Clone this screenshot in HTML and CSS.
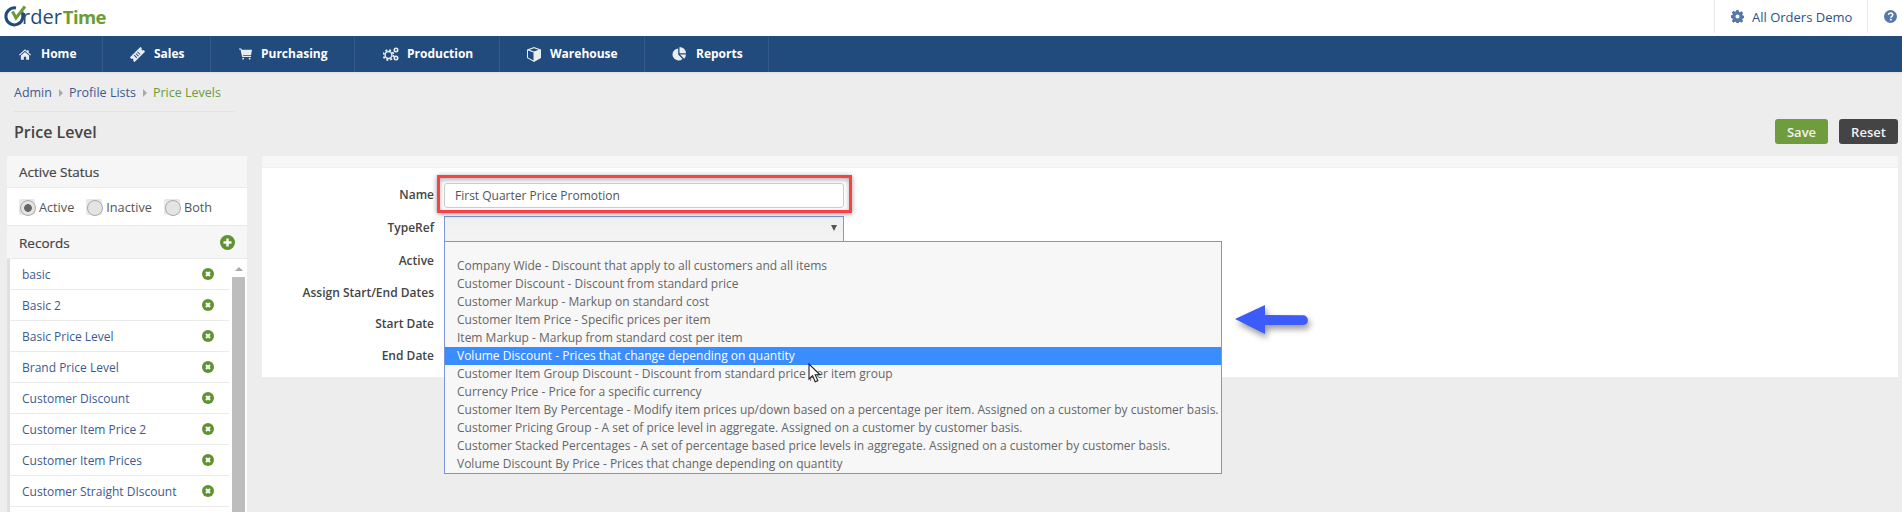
FILE: index.html
```html
<!DOCTYPE html>
<html lang="en">
<head>
<meta charset="utf-8">
<title>Price Level</title>
<link rel="stylesheet" href="styles.css">
</head>
<body>
<header class="topbar">
  <div class="logo"><svg class="logo-o" width="20" height="24" viewBox="0 0 20 24"><path d="M15 7A8.500 8.500 0 1 1 10 4" fill="none" stroke="#1f4a7d" stroke-width="3"/><path d="M6.500 7.500l3.500 6.500L19 2.500" fill="none" stroke="#6c9c38" stroke-width="3"/></svg><span class="logo-order">rder</span><span class="logo-time">Time</span></div>
  <div class="top-right">
    <div class="top-company"><svg class="gear" width="13" height="13" viewBox="0 0 16 16"><path fill="#5578a8" fill-rule="evenodd" d="M6.600 0h2.800l.4 2.200 1.300.6 1.900-1.200 2 2-1.200 1.900.5 1.300 1.700.4v2.800l-1.700.4-.5 1.300 1.200 1.900-2 2-1.900-1.200-1.300.5-.4 1.600H6.600l-.4-1.600-1.300-.5-1.900 1.200-2-2 1.200-1.900-.5-1.300L0 9.400V6.600l1.700-.4.5-1.300L1 3l2-2 1.900 1.200 1.300-.6zM8 5.500a2.500 2.500 0 100 5 2.500 2.500 0 000-5z"/></svg><span>All Orders Demo</span></div>
    <div class="top-help"><svg width="13" height="13" viewBox="0 0 14 14"><circle cx="7" cy="7" r="7" fill="#5578a8"/><path d="M4.700 5.300C4.900 3.900 5.900 3.300 7.100 3.300c1.300 0 2.300.8 2.300 1.900 0 1.700-2 1.600-2 3.200" fill="none" stroke="#fff" stroke-width="1.700"/><rect x="6.400" y="9.500" width="1.900" height="1.800" fill="#fff"/></svg></div>
  </div>
</header>
<nav class="navbar">
  <a class="nav-item nav-home"><svg width="12" height="11" viewBox="0 0 14 12"><path fill="#e8edf3" d="M7 0l2.500 2.200V1h1.800v2.800L14 6.200l-.8.9L7 1.700.8 7.100 0 6.200zM2.200 7.200L7 3l4.800 4.200V12H8.300V8.500H5.700V12H2.200z"/></svg><span>Home</span></a>
  <a class="nav-item nav-sales"><svg width="15" height="15" viewBox="0 0 16 16"><g transform="rotate(-45 8 8)"><path fill="#e8edf3" fill-rule="evenodd" d="M0 4.500h16v2.200a1.300 1.300 0 000 2.600v2.200H0V9.300a1.300 1.300 0 000-2.600zM4.500 6v4h1V6zM7 6v4h1V6zM9.500 6v4h1V6z"/></g></svg><span>Sales</span></a>
  <a class="nav-item nav-purch"><svg width="13" height="12" viewBox="0 0 14 12"><path fill="#e8edf3" d="M0 0h2.500l.5 1.500h11l-1 5.500H4.200l.3 1h8.500v1.200H3.400L1.600 1.200H0z"/><circle cx="4.500" cy="11" r="1" fill="#e8edf3"/><circle cx="11.500" cy="11" r="1" fill="#e8edf3"/></svg><span>Purchasing</span></a>
  <a class="nav-item nav-prod"><svg width="16" height="14" viewBox="0 0 16 14"><circle cx="5.500" cy="8" r="3.400" fill="none" stroke="#e8edf3" stroke-width="1.500"/><circle cx="5.500" cy="8" r="5" fill="none" stroke="#e8edf3" stroke-width="1.800" stroke-dasharray="2 1.930"/><circle cx="13" cy="3" r="1.700" fill="none" stroke="#e8edf3" stroke-width="1.600"/><circle cx="13" cy="11" r="1.700" fill="none" stroke="#e8edf3" stroke-width="1.600"/></svg><span>Production</span></a>
  <a class="nav-item nav-ware"><svg width="14" height="15" viewBox="0 0 14 15"><path fill="#e8edf3" fill-rule="evenodd" d="M7 0l7 2.500v8.500l-7 4-7-4V2.500zM7 1.200L2.500 2.800 7 4.500l4.500-1.700zM1 3.500V10.400l5.500 3V5.400z"/></svg><span>Warehouse</span></a>
  <a class="nav-item nav-rep"><svg width="14" height="14" viewBox="0 0 14 14"><path fill="#e8edf3" d="M6.200 1.500V7.500L10.500 12A6 6 0 116.200 1.500zM7.500 0A6.500 6.500 0 0114 6.300H7.500zM8 7.500h6a6.500 6.500 0 01-1.800 4.300z"/></svg><span>Reports</span></a>
</nav>
<main class="page">
  <div class="breadcrumb"><a>Admin</a><i class="crumb-sep"></i><a>Profile Lists</a><i class="crumb-sep"></i><a class="current">Price Levels</a></div>
  <div class="title-row">
    <h1>Price Level</h1>
    <div class="actions"><button class="btn btn-save">Save</button><button class="btn btn-reset">Reset</button></div>
  </div>
  <div class="columns">
    <aside class="sidebar">
      <div class="side-head">Active Status</div>
      <div class="radios">
        <label class="radio on"><i></i>Active</label>
        <label class="radio"><i></i>Inactive</label>
        <label class="radio"><i></i>Both</label>
      </div>
      <div class="side-head records">Records<svg width="15" height="15" viewBox="0 0 15 15"><circle cx="7.500" cy="7.500" r="7.500" fill="#5f9230"/><path d="M7.500 3.500v8M3.500 7.500h8" stroke="#fff" stroke-width="2.400"/></svg></div>
      <div class="list-wrap">
        <ul class="list">
          <li>basic<svg class="del" viewBox="0 0 12 12"><circle cx="6" cy="6" r="6"/><path d="M4 4l4 4M8 4l-4 4"/></svg></li>
          <li>Basic 2<svg class="del" viewBox="0 0 12 12"><circle cx="6" cy="6" r="6"/><path d="M4 4l4 4M8 4l-4 4"/></svg></li>
          <li>Basic Price Level<svg class="del" viewBox="0 0 12 12"><circle cx="6" cy="6" r="6"/><path d="M4 4l4 4M8 4l-4 4"/></svg></li>
          <li>Brand Price Level<svg class="del" viewBox="0 0 12 12"><circle cx="6" cy="6" r="6"/><path d="M4 4l4 4M8 4l-4 4"/></svg></li>
          <li>Customer Discount<svg class="del" viewBox="0 0 12 12"><circle cx="6" cy="6" r="6"/><path d="M4 4l4 4M8 4l-4 4"/></svg></li>
          <li>Customer Item Price 2<svg class="del" viewBox="0 0 12 12"><circle cx="6" cy="6" r="6"/><path d="M4 4l4 4M8 4l-4 4"/></svg></li>
          <li>Customer Item Prices<svg class="del" viewBox="0 0 12 12"><circle cx="6" cy="6" r="6"/><path d="M4 4l4 4M8 4l-4 4"/></svg></li>
          <li>Customer Straight DIscount<svg class="del" viewBox="0 0 12 12"><circle cx="6" cy="6" r="6"/><path d="M4 4l4 4M8 4l-4 4"/></svg></li>
        </ul>
        <div class="scrollbar"><i class="sb-arrow"></i><i class="sb-thumb"></i></div>
      </div>
    </aside>
    <section class="detail">
      <div class="detail-top"></div>
      <form class="form">
        <div class="labels">
          <div>Name</div><div>TypeRef</div><div>Active</div><div class="short">Assign Start/End Dates</div><div class="short">Start Date</div><div>End Date</div>
        </div>
        <div class="fields">
          <div class="name-highlight"><div class="name-input">First Quarter Price Promotion</div></div>
          <div class="select"><i></i></div>
          <ul class="options">
            <li>Company Wide - Discount that apply to all customers and all items</li>
            <li>Customer Discount - Discount from standard price</li>
            <li>Customer Markup - Markup on standard cost</li>
            <li>Customer Item Price - Specific prices per item</li>
            <li>Item Markup - Markup from standard cost per item</li>
            <li class="selected">Volume Discount - Prices that change depending on quantity</li>
            <li>Customer Item Group Discount - Discount from standard price per item group</li>
            <li>Currency Price - Price for a specific currency</li>
            <li>Customer Item By Percentage - Modify item prices up/down based on a percentage per item. Assigned on a customer by customer basis.</li>
            <li>Customer Pricing Group - A set of price level in aggregate. Assigned on a customer by customer basis.</li>
            <li>Customer Stacked Percentages - A set of percentage based price levels in aggregate. Assigned on a customer by customer basis.</li>
            <li>Volume Discount By Price - Prices that change depending on quantity</li>
          </ul>
          <svg class="cursor" width="14" height="20" viewBox="0 0 14 20"><path d="M1 1v15l3.600-3.300 2.600 6 2.600-1.100-2.600-5.800H12z" fill="#fff" stroke="#222" stroke-width="1.100"/></svg>
        </div>
        <svg class="arrow" width="73" height="29" viewBox="0 0 73 29"><path d="M0 14L30 0v10l38 .3a4.900 4.900 0 010 9.800L30 20v9z" fill="#3d5bf8"/></svg>
      </form>
    </section>
  </div>
</main>
</body>
</html>
```
FILE: styles.css
```css
* { box-sizing: border-box; }
html, body { margin: 0; padding: 0; height: 512px; overflow: hidden; }
body { background: #ededed; font-family: "Open Sans", sans-serif; font-size: 12px; color: #444; }
ul { list-style: none; margin: 0; padding: 0; }
i { display: block; }

.topbar { height: 36px; background: #fff; display: flex; justify-content: space-between; }
.logo { display: flex; align-items: center; padding-left: 5px; height: 36px; }
.logo-o { flex: none; margin: -4px -4px 0 1px; overflow: visible; }
.logo-order { color: #1f4a7d; font-size: 20px; margin-top: -3px; }
.logo-time { color: #6c9c38; font-weight: 700; font-size: 18.500px; letter-spacing: -0.6px; margin: -3px 0 0 1px; }
.top-right { display: flex; height: 33px; }
.top-company { width: 154px; border-left: 1px solid #e8e8e8; border-right: 1px solid #e8e8e8; display: flex; align-items: center; padding-left: 16px; gap: 8px; color: #2d5286; font-size: 13px; }
.top-help { width: 34px; display: flex; align-items: center; padding-left: 16px; }

.navbar { height: 36px; background: #214a7d; display: flex; box-shadow: 0 1px 2px #ddd; }
.nav-item { display: flex; align-items: center; color: #fff; font-weight: 700; font-size: 12px; border-right: 1px solid #33598a; height: 36px; }
.nav-item span { display: block; margin-top: -2px; }
.nav-home { width: 103px; padding-left: 19px; gap: 10px; }
.nav-sales { width: 108px; padding-left: 27px; gap: 9px; }
.nav-purch { width: 144px; padding-left: 28px; gap: 9px; }
.nav-prod { width: 145px; padding-left: 28px; gap: 8px; }
.nav-ware { width: 145px; padding-left: 27px; gap: 9px; }
.nav-rep { width: 124px; padding-left: 27px; gap: 10px; }

.breadcrumb { margin-left: 14px; width: 221px; height: 40px; padding-top: 12px; border-bottom: 1px solid #e3e3e3; display: flex; align-items: flex-start; font-size: 12.500px; color: #3d5a8f; line-height: 17px; }
.crumb-sep { width: 0; height: 0; border-left: 4px solid #aaa; border-top: 4px solid transparent; border-bottom: 4px solid transparent; margin: 5px 6px 0 7px; }
.current { color: #6c9c38; }
.title-row { display: flex; justify-content: space-between; align-items: flex-start; padding: 0 4px 0 14px; height: 36px; }
h1 { margin: 9px 0 0; font-size: 16px; font-weight: 600; color: #444; line-height: 22px; }
.actions { display: flex; gap: 11px; margin-top: 7px; }
.btn { height: 25px; border: 0; border-radius: 3px; color: #f2f2f2; font-family: inherit; font-size: 13px; font-weight: 600; padding: 0; }
.btn-save { width: 53px; background: #6f9c3c; }
.btn-reset { width: 59px; background: #444; }

.columns { display: flex; align-items: flex-start; margin-top: 8px; }
.sidebar { width: 240px; margin-left: 7px; height: 356px; background: #fff; flex: none; }
.side-head { height: 32px; background: #f6f6f6; border-bottom: 1px solid #ebebeb; padding: 0 12px; font-size: 13.500px; color: #444; -webkit-text-stroke: 0.2px #444; display: flex; align-items: center; }
.radios { height: 38px; display: flex; align-items: center; padding-left: 12px; border-bottom: 1px solid #e8e8e8; }
.radio { display: flex; align-items: center; margin-right: 12px; font-size: 12.700px; color: #555; gap: 4px; }
.radio i { width: 16px; height: 16px; background: #e8e8e8; border-radius: 2px; }
.radio i::after { content: ""; display: block; width: 14px; height: 14px; margin: 1px; border-radius: 50%; border: 1px solid #aaa; background: #e4e4e4; }
.radio.on i::after { background: radial-gradient(circle, #666 0 3.500px, #e4e4e4 4.200px); }
.records { height: 33px; justify-content: space-between; padding-top: 1px; }
.list-wrap { display: flex; height: 253px; border-left: 3px solid #e0e0e0; }
.list { width: 219px; }
.list li { height: 31px; border-bottom: 1px solid #ebebeb; padding: 6px 15px 0 12px; display: flex; justify-content: space-between; color: #3d5a8f; font-size: 12px; line-height: 19px; }
.del { width: 12px; height: 12px; margin-top: 3px; }
.del circle { fill: #5f9230; }
.del path { stroke: #fff; stroke-width: 2; }
.scrollbar { width: 13px; margin-left: 3px; display: flex; flex-direction: column; align-items: center; }
.sb-arrow { width: 0; height: 0; border-left: 4px solid transparent; border-right: 4px solid transparent; border-bottom: 4px solid #aaa; margin: 8px 0 6px; }
.sb-thumb { width: 13px; flex: 1; background: #bdbdbd; }

.detail { margin-left: 15px; width: 1636px; height: 221px; background: #fff; flex: none; }
.detail-top { height: 12px; background: #f6f6f6; border-bottom: 1px solid #f0f0f0; }
.form { display: flex; position: relative; }
.labels { width: 182px; padding: 10px 10px 0 0; text-align: right; font-size: 12px; font-weight: 600; color: #444; flex: none; }
.labels div { height: 33px; line-height: 33px; }
.labels .short { height: 31px; line-height: 31px; }
.fields { width: 778px; position: relative; }
.name-highlight { position: absolute; left: -7px; top: 7px; width: 415px; height: 38px; border: 3px solid #f64246; box-shadow: 0 1px 5px rgba(0,0,0,.4), inset 0 2px 5px rgba(0,0,0,.3); padding: 5px 0 0 4px; background: #fff; z-index: 2; }
.name-input { width: 400px; height: 25px; border: 1px solid #ccc; border-radius: 3px; padding: 3px 10px; font-size: 12px; line-height: 17px; color: #555; }
.select { position: absolute; left: 0; top: 48px; width: 400px; height: 26px; border: 1px solid #7c9ad8; background: linear-gradient(#f0f0f0, #f3f3f3); }
.select i { position: absolute; right: 6px; top: 8px; width: 0; height: 0; border-left: 3px solid transparent; border-right: 3px solid transparent; border-top: 6px solid #555; }
.options { position: absolute; left: 0; top: 73px; width: 778px; height: 233px; border: 1px solid #7c95d8; background: #f7f7f7; padding-top: 15px; z-index: 3; font-size: 12px; color: #666; }
.options li { height: 18px; padding-left: 12px; line-height: 18px; white-space: nowrap; }
.options .selected { background: #3a8dff; color: #fff; }
.cursor { position: absolute; left: 364px; top: 195px; z-index: 4; }
.arrow { position: absolute; left: 973px; top: 137px; filter: drop-shadow(2px 4px 3px rgba(0,0,0,.4)); }
```
